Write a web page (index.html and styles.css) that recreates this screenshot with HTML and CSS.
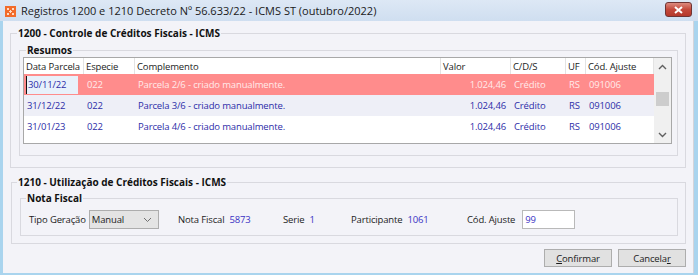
FILE: index.html
```html
<!DOCTYPE html>
<html lang="pt-BR">
<head>
    <meta charset="UTF-8">
    <title>Registros 1200 e 1210</title>
    <link rel="stylesheet" href="styles.css">
</head>
<body>
    <div class="window">
        <div class="titlebar">
            <svg class="app-icon" width="11" height="11" viewBox="0 0 11 11">
                <rect width="11" height="11" fill="#f26b2a"/>
                <path d="M2 2l2 2M4 2l-2 2M7 2l2 2M9 2l-2 2M2 7l2 2M4 7l-2 2M7 7l2 2M9 7l-2 2M5.5 4v3M4 5.5h3" stroke="#ffd9c2" stroke-width="1"/>
            </svg>
            <span class="title">Registros 1200 e 1210 Decreto Nº 56.633/22 - ICMS ST (outubro/2022)</span>
            <button class="close-btn">
                <svg width="9" height="8" viewBox="0 0 9 8">
                    <path d="M1 1l7 6M8 1l-7 6" stroke="#fff" stroke-width="2"/>
                </svg>
            </button>
        </div>

        <div class="client">
            <fieldset class="group group-1200">
                <legend>1200 - Controle de Créditos Fiscais - ICMS</legend>
                <fieldset class="group group-resumos">
                    <legend>Resumos</legend>
                    <div class="grid">
                        <div class="grid-body">
                            <div class="grid-row header">
                                <div class="cell">Data Parcela</div>
                                <div class="cell">Especie</div>
                                <div class="cell">Complemento</div>
                                <div class="cell">Valor</div>
                                <div class="cell">C/D/S</div>
                                <div class="cell">UF</div>
                                <div class="cell">Cód. Ajuste</div>
                            </div>
                            <div class="grid-row selected">
                                <div class="cell"><span class="editor">30/11/22</span></div>
                                <div class="cell">022</div>
                                <div class="cell">Parcela 2/6 - criado manualmente.</div>
                                <div class="cell num">1.024,46</div>
                                <div class="cell">Crédito</div>
                                <div class="cell">RS</div>
                                <div class="cell">091006</div>
                            </div>
                            <div class="grid-row alt">
                                <div class="cell">31/12/22</div>
                                <div class="cell">022</div>
                                <div class="cell">Parcela 3/6 - criado manualmente.</div>
                                <div class="cell num">1.024,46</div>
                                <div class="cell">Crédito</div>
                                <div class="cell">RS</div>
                                <div class="cell">091006</div>
                            </div>
                            <div class="grid-row">
                                <div class="cell">31/01/23</div>
                                <div class="cell">022</div>
                                <div class="cell">Parcela 4/6 - criado manualmente.</div>
                                <div class="cell num">1.024,46</div>
                                <div class="cell">Crédito</div>
                                <div class="cell">RS</div>
                                <div class="cell">091006</div>
                            </div>
                        </div>
                        <div class="scrollbar">
                            <svg class="arrow" width="9" height="6" viewBox="0 0 9 6">
                                <path d="M1 5l3.5-3.5L8 5" fill="none" stroke="#606060" stroke-width="1.4"/>
                            </svg>
                            <div class="track"><div class="thumb"></div></div>
                            <svg class="arrow" width="9" height="6" viewBox="0 0 9 6">
                                <path d="M1 1l3.5 3.5L8 1" fill="none" stroke="#606060" stroke-width="1.4"/>
                            </svg>
                        </div>
                    </div>
                </fieldset>
            </fieldset>

            <fieldset class="group group-1210">
                <legend>1210 - Utilização de Créditos Fiscais - ICMS</legend>
                <fieldset class="group group-nota">
                    <legend>Nota Fiscal</legend>
                    <div class="fields">
                        <div class="field field-tipo">
                            <span class="label">Tipo Geração</span>
                            <div class="combo">
                                <span>Manual</span>
                                <svg width="9" height="6" viewBox="0 0 9 6">
                                    <path d="M1 1l3.5 3.5L8 1" fill="none" stroke="#707070" stroke-width="1"/>
                                </svg>
                            </div>
                        </div>
                        <div class="field field-nf">
                            <span class="label">Nota Fiscal</span>
                            <span class="value">5873</span>
                        </div>
                        <div class="field field-serie">
                            <span class="label">Serie</span>
                            <span class="value">1</span>
                        </div>
                        <div class="field field-part">
                            <span class="label">Participante</span>
                            <span class="value">1061</span>
                        </div>
                        <div class="field field-cod">
                            <span class="label">Cód. Ajuste</span>
                            <div class="edit">99</div>
                        </div>
                    </div>
                </fieldset>
            </fieldset>

            <div class="buttons">
                <button class="btn"><u>C</u>onfirmar</button>
                <button class="btn">Cancela<u>r</u></button>
            </div>
        </div>
    </div>
</body>
</html>
```

FILE: styles.css
```css
body {
    margin: 0;
    font-family: 'Open Sans', 'Noto Sans', sans-serif;
    font-size: 9.5px;
    letter-spacing: -0.15px;
    color: #1c1c1c;
    background: #f3f3f8;
}
.window {
    width: 698px;
    height: 275px;
    display: flex;
    flex-direction: column;
    background: #a9d4ee;
    overflow: hidden;
}
/* Title bar */
.titlebar {
    height: 21px;
    flex: none;
    display: flex;
    align-items: center;
    background: linear-gradient(#dde8f5, #cfdef0);
    padding-left: 5px;
    padding-right: 6px;
}
.app-icon {
    flex: none;
    margin-top: 2px;
}
.title {
    margin-left: 5px;
    font-size: 11px;
    letter-spacing: 0;
    color: #1a1a1a;
    flex: 1;
    white-space: nowrap;
}
.close-btn {
    width: 27px;
    height: 15px;
    margin-top: -2px;
    padding: 0;
    border: 1px solid #6e3434;
    border-radius: 3px;
    background: linear-gradient(#dc8a7e, #c4493b 50%, #b5382a);
    display: flex;
    align-items: center;
    justify-content: center;
}
/* Client area */
.client {
    flex: 1;
    margin: 0 4px 2px 3px;
    background: #f3f3f8;
    border-right: 1px solid #d4d4da;
    padding: 5px 7px 0 7px;
    display: flex;
    flex-direction: column;
}
.group {
    margin: 0;
    border: 1px solid #d9d9df;
    min-width: 0;
}
.group legend {
    font-size: 10px;
    letter-spacing: 0;
    font-weight: bold;
    line-height: 14px;
    padding: 0 1px;
    color: #111;
}
.group-1200 {
    padding: 3px 7px 11px 8px;
}
.group-1200 > legend {
    margin-left: -2px;
}
.group-resumos {
    padding: 0 5px 11px 3px;
}
.group-resumos > legend {
    margin-left: 3px;
}
.group-1210 {
    margin-top: 7px;
    margin-left: 1px;
    padding: 2px 7px 7px 8px;
}
.group-1210 > legend {
    margin-left: -3px;
}
.group-nota {
    padding: 5px 7px 6px 8px;
}
.group-nota > legend {
    margin-left: -3px;
}
/* Grid */
.grid {
    display: flex;
    height: 85px;
    border: 1px solid #a8a8a8;
    background: #fff;
}
.grid-body {
    flex: 1;
}
.grid-row {
    display: grid;
    grid-template-columns: 60px 51px 306px 70px 55px 20px 68px;
    height: 21px;
    align-items: center;
    color: #2d2da8;
}
.grid-row.header {
    height: 16px;
    color: #1c1c1c;
    align-items: stretch;
}
.header .cell {
    border-right: 1px solid #e3e3e3;
    display: flex;
    align-items: center;
    padding-left: 2px;
    padding-top: 1px;
}
.cell {
    padding-left: 3px;
    white-space: nowrap;
    overflow: hidden;
}
.cell.num {
    text-align: right;
    padding-right: 5px;
}
.grid-row.selected {
    background: #ff8c8c;
    color: #ffeaea;
}
.grid-row.alt {
    background: #eeeff7;
}
.editor {
    display: block;
    margin-left: -1px;
    width: 52px;
    height: 18px;
    line-height: 18px;
    background: #e8f1fb;
    color: #2d2da8;
    padding-left: 1px;
    border-left: 1px solid #111;
    box-sizing: border-box;
}
.scrollbar {
    width: 17px;
    flex: none;
    background: #f0f0f0;
    display: flex;
    flex-direction: column;
    align-items: center;
    padding: 6px 0 5px;
    box-sizing: border-box;
}
.track {
    flex: 1;
    width: 100%;
    padding-top: 22px;
}
.thumb {
    width: 13px;
    height: 14px;
    margin: 0 auto;
    background: #cdcdcd;
}
/* Nota fiscal fields */
.fields {
    display: flex;
    align-items: center;
    height: 19px;
}
.field {
    display: flex;
    align-items: center;
    gap: 5px;
    flex: none;
}
.field-tipo { width: 149px; gap: 3px; }
.field-nf { width: 105px; }
.field-serie { width: 68px; }
.field-part { width: 116px; }
.field-cod { gap: 7px; }
.value {
    color: #3a32c4;
}
.combo {
    width: 70px;
    height: 19px;
    box-sizing: border-box;
    background: #e4e4e4;
    border: 1px solid #adadad;
    display: flex;
    align-items: center;
    justify-content: space-between;
    padding: 0 6px 0 2px;
}
.edit {
    width: 53px;
    height: 19px;
    box-sizing: border-box;
    background: #fff;
    border: 1px solid #b9b9b9;
    color: #3a32c4;
    padding-left: 2px;
    line-height: 17px;
}
/* Buttons */
.buttons {
    display: flex;
    justify-content: flex-end;
    gap: 6px;
    margin-top: 5px;
}
.btn {
    width: 68px;
    height: 18px;
    padding: 0;
    font-family: inherit;
    font-size: 9.5px;
    letter-spacing: -0.15px;
    color: #1c1c1c;
    background: #e1e1e1;
    border: 1px solid #adadad;
}
```
